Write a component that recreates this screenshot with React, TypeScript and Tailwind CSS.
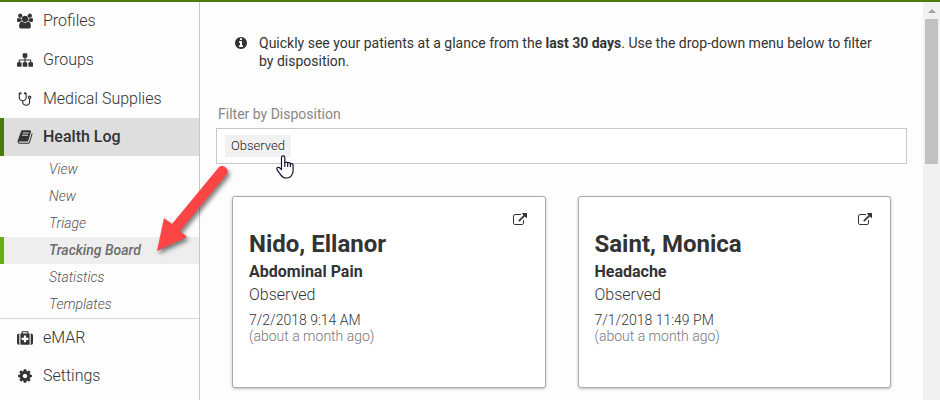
import React from "react";

type IconProps = { d: string; viewBox?: string; className?: string };

function Icon({ d, viewBox = "0 0 1792 1792", className = "" }: IconProps) {
  return (
    <svg viewBox={viewBox} fill="currentColor" aria-hidden="true" className={className}>
      <path d={d} />
    </svg>
  );
}

const paths = {
  users:
    "M593 896q-162 5-265 128h-134q-82 0-138-40.5t-56-118.5q0-353 124-353 6 0 43.5 21t97.5 42.5 119 21.5q67 0 133-23-5 37-5 66 0 139 81 256zm1071 637q0 120-73 189.500t-194 69.500h-874q-121 0-194-69.500t-73-189.500q0-53 3.500-103.500t14-109 26.500-108.500 43-97.500 62-81 85.500-53.500 111.500-20q10 0 43 21.500t73 48 107 48 135 21.500 135-21.500 107-48 73-48 43-21.500q61 0 111.500 20t85.500 53.500 62 81 43 97.500 26.500 108.500 14 109 3.500 103.500zm-1024-1277q0 106-75 181t-181 75-181-75-75-181 75-181 181-75 181 75 75 181zm704 384q0 159-112.500 271.500t-271.500 112.500-271.500-112.500-112.500-271.500 112.500-271.500 271.500-112.500 271.500 112.500 112.500 271.500zm576 225q0 78-56 118.500t-138 40.500h-134q-103-123-265-128 81-117 81-256 0-29-5-66 66 23 133 23 59 0 119-21.500t97.500-42.500 43.500-21q124 0 124 353zm-128-609q0 106-75 181t-181 75-181-75-75-181 75-181 181-75 181 75 75 181z",
  sitemap:
    "M1792 1248v320q0 40-28 68t-68 28h-320q-40 0-68-28t-28-68v-320q0-40 28-68t68-28h96v-192h-512v192h96q40 0 68 28t28 68v320q0 40-28 68t-68 28h-320q-40 0-68-28t-28-68v-320q0-40 28-68t68-28h96v-192h-512v192h96q40 0 68 28t28 68v320q0 40-28 68t-68 28h-320q-40 0-68-28t-28-68v-320q0-40 28-68t68-28h96v-192q0-52 38-90t90-38h512v-192h-96q-40 0-68-28t-28-68v-320q0-40 28-68t68-28h320q40 0 68 28t28 68v320q0 40-28 68t-68 28h-96v192h512q52 0 90 38t38 90v192h96q40 0 68 28t28 68z",
  stethoscope:
    "M1472 704q0-26-19-45t-45-19-45 19-19 45 19 45 45 19 45-19 19-45zm128 0q0 62-35.500 111t-92.500 70v395q0 159-131.500 271.500t-316.500 112.500-316.500-112.500-131.500-271.500v-132q-164-20-274-128t-110-252v-512q0-26 19-45t45-19q6 0 16 2 17-30 47-48t65-18q53 0 90.500 37.500t37.500 90.500-37.500 90.500-90.500 37.500q-33 0-64-18v402q0 106 94 181t226 75 226-75 94-181v-402q-31 18-64 18-53 0-90.500-37.500t-37.500-90.500 37.500-90.500 90.500-37.500q35 0 65 18t47 48q10-2 16-2 26 0 45 19t19 45v512q0 144-110 252t-274 128v132q0 106 94 181t226 75 226-75 94-181v-395q-57-21-92.500-70t-35.500-111q0-80 56-136t136-56 136 56 56 136z",
  book: "M1703 478q40 57 18 129l-275 906q-19 64-76.500 107.500t-122.500 43.500h-923q-77 0-148.500-53.500t-99.500-131.500q-24-67-2-127 0-4 3-27t4-37q1-8-3-21.500t-3-19.500q2-11 8-21t16.500-23.500 16.500-23.500q23-38 45-91.500t30-91.500q3-10 .5-30t-.5-28q3-11 17-28t17-23q21-36 42-92t25-90q1-9-2.500-32t.5-28q4-13 22-30.500t22-22.500q19-26 42.500-84.500t27.500-96.500q1-8-3-25.500t-2-26.500q2-8 9-18t18-23 17-21q8-12 16.500-30.500t15-35 16-36 19.500-32 26.500-23.500 36-11.500 47.500 5.500l-1 3q38-9 51-9h761q74 0 114 56t18 130l-274 906q-36 119-71.500 153.500t-128.500 34.500h-869q-27 0-38 15-11 16-1 43 24 70 144 70h923q29 0 56-15.500t35-41.500l300-987q7-22 5-57 38 15 59 43zm-1064 2q-4 13 2 22.500t20 9.500h608q13 0 25.500-9.500t16.500-22.500l21-64q4-13-2-22.500t-20-9.500h-608q-13 0-25.500 9.500t-16.500 22.500zm-83 256q-4 13 2 22.500t20 9.500h608q13 0 25.500-9.500t16.500-22.500l21-64q4-13-2-22.500t-20-9.500h-608q-13 0-25.500 9.500t-16.500 22.500z",
  medkit:
    "M1280 1088v-192q0-14-9-23t-23-9h-224v-224q0-14-9-23t-23-9h-192q-14 0-23 9t-9 23v224h-224q-14 0-23 9t-9 23v192q0 14 9 23t23 9h224v224q0 14 9 23t23 9h192q14 0 23-9t9-23v-224h224q14 0 23-9t9-23zm-640-704h512v-128h-512v128zm-384 0v1280h-32q-92 0-158-66t-66-158v-832q0-92 66-158t158-66h32zm1152 0v1280h-1024v-1280h128v-160q0-40 28-68t68-28h576q40 0 68 28t28 68v160h128zm384 224v832q0 92-66 158t-158 66h-32v-1280h32q92 0 158 66t66 158z",
  cog: "M1152 896q0-106-75-181t-181-75-181 75-75 181 75 181 181 75 181-75 75-181zm512-109v222q0 12-8 23t-20 13l-185 28q-19 54-39 91 35 50 107 138 10 12 10 25t-9 23q-27 37-99 108t-94 71q-12 0-26-9l-138-108q-44 23-91 38-16 136-29 186-7 28-36 28h-222q-14 0-24.500-8.500t-11.500-21.500l-28-184q-49-16-90-37l-141 107q-10 9-25 9-14 0-25-11-126-114-165-168-7-10-7-23 0-12 8-23 15-21 51-66.500t54-70.500q-27-50-41-99l-183-27q-13-2-21-12.500t-8-23.500v-222q0-12 8-23t19-13l186-28q14-46 39-92-40-57-107-138-10-12-10-24 0-10 9-23 26-36 98.500-107.500t94.500-71.500q13 0 26 10l138 107q44-23 91-38 16-136 29-186 7-28 36-28h222q14 0 24.500 8.500t11.500 21.500l28 184q49 16 90 37l142-107q9-9 24-9 13 0 25 10 129 119 165 170 7 8 7 22 0 12-8 23-15 21-51 66.500t-54 70.500q26 50 41 98l183 28q13 2 21 12.500t8 23.500z",
  info: "M1152 1376v-160q0-14-9-23t-23-9h-96v-512q0-14-9-23t-23-9h-320q-14 0-23 9t-9 23v160q0 14 9 23t23 9h96v320h-96q-14 0-23 9t-9 23v160q0 14 9 23t23 9h448q14 0 23-9t9-23zm-128-896v-160q0-14-9-23t-23-9h-192q-14 0-23 9t-9 23v160q0 14 9 23t23 9h192q14 0 23-9t9-23zm640 416q0 209-103 385.500t-279.500 279.500-385.500 103-385.500-103-279.500-279.500-103-385.500 103-385.500 279.500-279.500 385.500-103 385.500 103 279.500 279.500 103 385.500z",
  external:
    "M1408 928v320q0 119-84.500 203.500t-203.500 84.500h-832q-119 0-203.500-84.500t-84.500-203.500v-832q0-119 84.500-203.500t203.500-84.500h704q14 0 23 9t9 23v64q0 14-9 23t-23 9h-704q-66 0-113 47t-47 113v832q0 66 47 113t113 47h832q66 0 113-47t47-113v-320q0-14 9-23t23-9h64q14 0 23 9t9 23zm384-864v512q0 26-19 45t-45 19-45-19l-176-176-652 652q-10 10-23 10t-23-10l-114-114q-10-10-10-23t10-23l652-652-176-176q-19-19-19-45t19-45 45-19h512q26 0 45 19t19 45z",
};

type NavItem = { label: string; icon: string; viewBox?: string; active?: boolean };

const topItems: NavItem[] = [
  { label: "Profiles", icon: paths.users, viewBox: "0 0 1920 1792" },
  { label: "Groups", icon: paths.sitemap },
  { label: "Medical Supplies", icon: paths.stethoscope },
];

const bottomItems: NavItem[] = [
  { label: "eMAR", icon: paths.medkit },
  { label: "Settings", icon: paths.cog },
];

const healthLogItems = ["View", "New", "Triage", "Tracking Board", "Statistics", "Templates"];

const patients = [
  { name: "Nido, Ellanor", complaint: "Abdominal Pain", status: "Observed", time: "7/2/2018 9:14 AM", ago: "(about a month ago)" },
  { name: "Saint, Monica", complaint: "Headache", status: "Observed", time: "7/1/2018 11:49 PM", ago: "(about a month ago)" },
];

function NavLink({ label, icon, viewBox, active }: NavItem) {
  return (
    <a
      href="#"
      className={
        active
          ? "flex h-[38px] items-center border-l-4 border-[#4a7a0c] bg-[#dedede] pl-3 text-base font-medium text-[#333]"
          : "flex h-[38px] items-center border-l-4 border-transparent pl-3 text-base font-light text-[#333]"
      }
    >
      <span className="flex w-[18px] justify-center">
        <Icon d={icon} viewBox={viewBox} className="h-4 w-4" />
      </span>
      <span className="ml-[9px]">{label}</span>
    </a>
  );
}

function Sidebar() {
  return (
    <nav className="w-[200px] shrink-0 border-r border-[#c8c8c8]">
      <ul className="flex flex-col gap-px">
        {topItems.map((item) => (
          <li key={item.label}>
            <NavLink {...item} />
          </li>
        ))}
      </ul>
      <NavLink label="Health Log" icon={paths.book} active />
      <ul className="border-b border-[#d8d8d8]">
        {healthLogItems.map((label) => (
          <li key={label}>
            <a
              href="#"
              className={
                label === "Tracking Board"
                  ? "flex h-[27px] items-center border-l-4 border-[#68ab14] bg-[#eee] pb-0.5 pl-[45px] text-sm font-medium italic text-[#6c6c6c]"
                  : "flex h-[27px] items-center border-l-4 border-transparent pb-0.5 pl-[45px] text-sm font-light italic text-[#555]"
              }
            >
              {label}
            </a>
          </li>
        ))}
      </ul>
      <ul>
        {bottomItems.map((item) => (
          <li key={item.label}>
            <NavLink {...item} />
          </li>
        ))}
      </ul>
    </nav>
  );
}

function HandCursor() {
  return (
    <svg viewBox="0 0 18 24" aria-hidden="true" className="pointer-events-none absolute top-5 left-[51px] h-6 w-[18px]">
      <path
        d="M5.500 14.500V2.500a1.600 1.600 0 0 1 3.300 0V7.500q1.500-.8 2.900.3 1.500-.6 2.700.6 2.600-.1 2.700 2V15.500q0 2.500-1.300 4.500-1.600 3-5.600 3-3.600 0-5.400-3.100L1.100 14.800Q.3 13.200 1.600 12.500q1.300-.5 2.600.8Z"
        fill="#fff"
        stroke="#15152a"
        strokeWidth="1.200"
        strokeLinejoin="round"
      />
      <path d="M8.800 7.500v4M11.700 8v3.500M14.400 8.500v3" fill="none" stroke="#15152a" strokeWidth="1.200" strokeLinecap="round" />
    </svg>
  );
}

function PatientCard({ name, complaint, status, time, ago }: (typeof patients)[number]) {
  return (
    <article className="relative h-48 rounded-[3px] border border-[#aaa] bg-white px-4 pt-8 text-[#333] shadow-[0_1px_3px_rgba(0,0,0,0.25)]">
      <button type="button" aria-label={"Open " + name} className="absolute top-4 right-[18px] cursor-pointer">
        <Icon d={paths.external} className="h-[14px] w-[14px]" />
      </button>
      <h2 className="text-2xl leading-[30px] font-bold">{name}</h2>
      <h3 className="text-base leading-[25px] font-bold">{complaint}</h3>
      <p className="text-base leading-[22px] font-light">{status}</p>
      <p className="mt-[6px] text-sm leading-4 font-light">{time}</p>
      <p className="text-sm leading-4 font-light text-[#777]">{ago}</p>
    </article>
  );
}

function Scrollbar() {
  return (
    <div aria-hidden="true" className="flex w-[17px] shrink-0 flex-col items-center bg-[#f1f1f1]">
      <div className="flex h-[17px] items-center">
        <svg viewBox="0 0 8 4" className="h-1 w-2" fill="#a3a3a3">
          <path d="M4 0l4 4H0z" />
        </svg>
      </div>
      <div className="h-[145px] w-[13px] bg-[#c1c1c1]" />
    </div>
  );
}

function PointerArrow() {
  return (
    <svg
      viewBox="0 0 90 110"
      aria-hidden="true"
      className="pointer-events-none absolute top-[153px] left-[145px] h-[110px] w-[90px] drop-shadow-[2px_3px_2px_rgba(0,0,0,0.5)]"
    >
      <path d="M12 96L19 63l8 6L74 12a5.500 5.500 0 0 1 8 7L35 76l7 6Z" fill="#fd4545" />
    </svg>
  );
}

export default function App() {
  return (
    <div className="relative flex h-screen overflow-hidden border-t-2 border-[#4a7a0c] bg-[#fdfdfd] font-[Roboto,'Liberation_Sans',sans-serif] text-[#333]">
      <Sidebar />
      <main className="min-w-0 flex-1 px-4 pt-8">
        <div className="flex gap-[11px] pr-6 pl-[18px]">
          <Icon d={paths.info} className="mt-[2px] h-[14px] w-[14px] shrink-0" />
          <p className="text-sm leading-[18px]">
            Quickly see your patients at a glance from the <strong className="font-bold">last 30 days</strong>. Use the
            drop-down menu below to filter by disposition.
          </p>
        </div>
        <label htmlFor="disposition" className="mt-9 ml-[2px] block text-sm leading-4 text-[#888]">
          Filter by Disposition
        </label>
        <div className="mt-[6px] flex h-9 items-center border border-[#c8c8c8] bg-white pl-2">
          <div className="relative">
            <button type="button" className="flex h-[22px] cursor-pointer items-center bg-[#f1f1f1] px-[6px] text-[13px] font-light text-[#222]">
              Observed
            </button>
            <HandCursor />
          </div>
          <input id="disposition" type="text" className="h-full min-w-0 flex-1 bg-transparent px-2 text-sm outline-none" />
        </div>
        <section aria-label="Patients" className="mt-8 grid grid-cols-2 gap-8 px-4">
          {patients.map((patient) => (
            <PatientCard key={patient.name} {...patient} />
          ))}
        </section>
      </main>
      <Scrollbar />
      <PointerArrow />
    </div>
  );
}
